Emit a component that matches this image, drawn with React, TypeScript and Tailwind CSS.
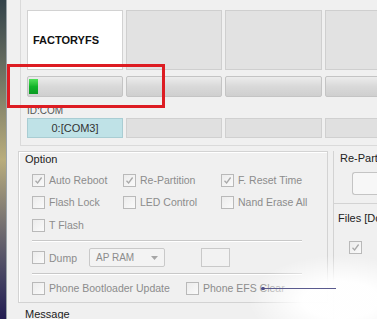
import React from "react";

const FONT = { fontFamily: '"Liberation Sans", Arial, sans-serif' };

const Check = ({checked = false}: {checked?: boolean}) => (
    <div className="w-[13px] h-[13px] shrink-0 border border-[#b9b9b9] bg-gradient-to-br from-[#ececec] to-[#fafafa] flex items-center justify-center">
        {checked && (
            <svg width="9" height="9" viewBox="0 0 9 9">
                <path d="M1.5 4.8 L3.6 7 L7.6 1.5" fill="none" stroke="#a9a9a9" strokeWidth="1.3"/>
            </svg>
        )}
    </div>
);

const Opt = ({label, checked, w}: {label: string; checked?: boolean; w: string}) => (
    <div className={`flex items-center gap-[4px] h-[16px] shrink-0 ${w}`}>
        <Check checked={checked}/>
        <span className="text-[10.5px] leading-[16px] text-[#8c8c8c] whitespace-nowrap">{label}</span>
    </div>
);

const Slot = ({first = false, w}: {first?: boolean; w: string}) => (
    <div className={`${w} shrink-0 h-[60px] border ${first ? 'bg-white border-[#d2d2d2]' : 'bg-[#e2e2e2] border-[#cfcfcf]'} flex items-center pl-[5px]`}>
        {first && <span className="text-[11px] font-bold text-[#111]">FACTORYFS</span>}
    </div>
);

const Bar = ({w, fill = false}: {w: string; fill?: boolean}) => (
    <div className={`${w} shrink-0 h-[21px] rounded-[2px] border border-[#c4c4c4] bg-gradient-to-b from-[#ececec] via-[#d9d9d9] to-[#cfcfcf] flex items-center px-[1px]`}>
        {fill && <div className="w-[9px] h-[15px] bg-gradient-to-b from-[#4ee25a] via-[#11b52a] to-[#0b9a22]"/>}
    </div>
);

const Com = ({w, active = false}: {w: string; active?: boolean}) => (
    <div className={`${w} shrink-0 h-[20px] border ${active ? 'bg-[#bfe2e7] border-[#a9cdd3]' : 'bg-[#e0e0e0] border-[#d0d0d0]'} flex items-center justify-center`}>
        {active && <span className="text-[11px] text-[#333]">0:[COM3]</span>}
    </div>
);

const Side = () => (
    <div className="w-[10px] h-[30px] rounded-l-[3px] border border-[#c4c4c4] border-r-0 bg-[#f7f7f7]"/>
);

export default function App() {
    return (
        <div className="w-[377px] h-[319px] flex overflow-hidden bg-[#f0f0f0] relative" style={FONT}>
            {/* desktop behind the window */}
            <div className="w-[7px] shrink-0 bg-gradient-to-b from-[#33434a] via-[#b9ad7c] to-[#231c52] border-r border-[#9aa3a8]"/>

            <div className="flex-1 flex flex-col min-w-0">
                {/* slots */}
                <div className="shrink-0 ml-[13px] h-[146px] overflow-hidden border-l border-b border-[#dadada] pt-[10px] pl-[6px]">
                    <div className="flex gap-[3px]">
                        <Slot first w="w-[96px]"/>
                        <Slot w="w-[96px]"/>
                        <Slot w="w-[97px]"/>
                        <Slot w="w-[60px]"/>
                    </div>
                    <div className="flex gap-[3px] mt-[6px]">
                        <Bar fill w="w-[96px]"/>
                        <Bar w="w-[96px]"/>
                        <Bar w="w-[97px]"/>
                        <Bar w="w-[60px]"/>
                    </div>
                    <div className="text-[10px] text-[#555] mt-[8px] leading-[12px]">ID:COM</div>
                    <div className="flex gap-[3px] mt-[1px]">
                        <Com active w="w-[96px]"/>
                        <Com w="w-[96px]"/>
                        <Com w="w-[97px]"/>
                        <Com w="w-[60px]"/>
                    </div>
                </div>

                <div className="flex mt-[5px] shrink-0">
                    {/* Option group */}
                    <div className="flex flex-col shrink-0">
                        <div className="ml-[11px] w-[310px] h-[152px] border border-[#d3d3d3] shadow-[inset_1px_1px_0_#fff] px-[6px] pt-[1px]">
                            <div className="text-[11px] text-[#222] leading-[12px]">Option</div>
                            <div className="pl-[7px] mt-[7px] flex flex-col gap-[6px]">
                                <div className="flex">
                                    <Opt checked label="Auto Reboot" w="w-[91px]"/>
                                    <Opt checked label="Re-Partition" w="w-[98px]"/>
                                    <Opt checked label="F. Reset Time" w="w-[90px]"/>
                                </div>
                                <div className="flex">
                                    <Opt label="Flash Lock" w="w-[91px]"/>
                                    <Opt label="LED Control" w="w-[98px]"/>
                                    <Opt label="Nand Erase All" w="w-[90px]"/>
                                </div>
                                <div className="flex mt-[1px]">
                                    <Opt label="T Flash" w="w-[91px]"/>
                                </div>
                            </div>
                            <div className="ml-[7px] mr-[19px] mt-[7px] border-t border-[#c8c8c8] shadow-[0_1px_0_#fff]"/>
                            <div className="pl-[7px] mt-[7px] flex items-center h-[19px]">
                                <Opt label="Dump" w="w-[57px]"/>
                                <div className="w-[76px] h-[19px] rounded-[2px] border border-[#c9c9c9] bg-[#f3f3f3] flex items-center justify-between pl-[6px] pr-[6px]">
                                    <span className="text-[10px] text-[#8c8c8c]">AP RAM</span>
                                    <svg width="7" height="4" viewBox="0 0 7 4"><path d="M0 0 L7 0 L3.5 4Z" fill="#a6a6a6"/></svg>
                                </div>
                                <div className="ml-[36px] w-[29px] h-[19px] border border-[#c9c9c9] bg-[#f2f2f2]"/>
                            </div>
                            <div className="ml-[7px] mr-[19px] mt-[6px] border-t border-[#c8c8c8] shadow-[0_1px_0_#fff]"/>
                            <div className="pl-[7px] mt-[6px] flex items-center">
                                <Opt label="Phone Bootloader Update" w="w-[154px]"/>
                                <Opt label="Phone EFS Clear" w="w-[100px]"/>
                            </div>
                        </div>
                        <div className="ml-[18px] mt-[5px] text-[11px] text-[#222] leading-[12px]">Message</div>
                    </div>

                    {/* right column */}
                    <div className="ml-[5px] flex-1 min-w-0 overflow-hidden border-l border-[#d3d3d3] h-[180px] flex flex-col">
                        <div className="pl-[6px] text-[11px] text-[#222] leading-[12px] mt-[1px] whitespace-nowrap">Re-Partition</div>
                        <div className="ml-[18px] mt-[8px] h-[25px] rounded-l-[3px] border border-[#c4c4c4] border-r-0 bg-[#f7f7f7]"/>
                        <div className="mt-[8px] border-t border-[#d3d3d3]"/>
                        <div className="pl-[4px] mt-[8px] text-[11px] text-[#222] leading-[12px] whitespace-nowrap">Files [Download]</div>
                        <div className="flex items-start mt-[7px]">
                            <div className="ml-[15px] mt-[10px]"><Check checked/></div>
                            <div className="ml-[16px] flex flex-col gap-[5px]">
                                <Side/>
                                <Side/>
                                <Side/>
                            </div>
                        </div>
                    </div>
                </div>
            </div>

            {/* red highlight box */}
            <div className="absolute left-[7px] top-[64px] w-[158px] h-[44px] border-[3px] border-[#dd1c22]"/>

            {/* annotation glare + pointer line */}
            <div className="absolute left-[250px] top-[256px] w-[140px] h-[80px] bg-[radial-gradient(ellipse_at_65%_55%,rgba(255,255,255,0.97)_30%,rgba(255,255,255,0)_72%)]"/>
            <div className="absolute left-[262px] top-[288px] w-[74px] h-[1px] bg-[#5a5a8e]"/>
            <div className="absolute left-[261px] top-[287px] w-[4px] h-[3px] bg-[#4b4b86] rounded-full"/>
        </div>
    );
}
